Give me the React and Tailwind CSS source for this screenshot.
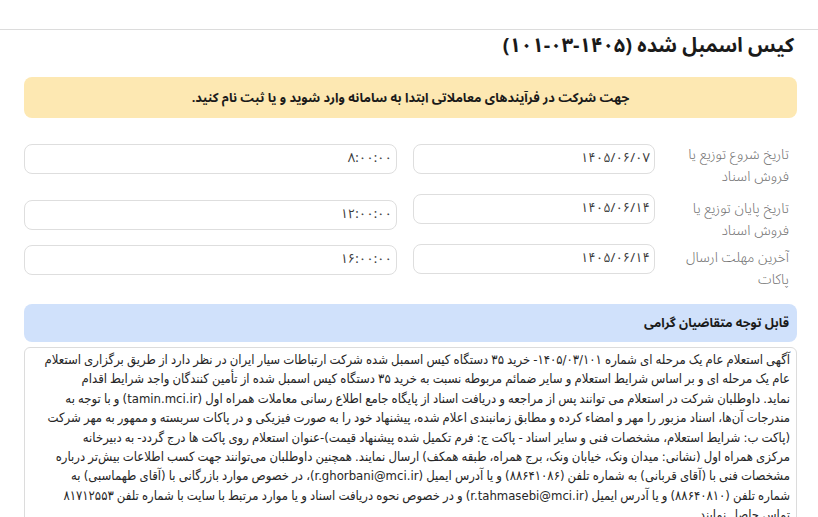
const rows = [
  { label: ["تاریخ شروع توزیع یا", "فروش اسناد"], date: "۱۴۰۵/۰۶/۰۷", time: "۸:۰۰:۰۰", lab: "mt-0", tm: "mt-0" },
  { label: ["تاریخ پایان توزیع یا", "فروش اسناد"], date: "۱۴۰۵/۰۶/۱۴", time: "۱۲:۰۰:۰۰", lab: "mt-[4px]", tm: "mt-[6px]" },
  { label: ["آخرین مهلت ارسال", "پاکات"], date: "۱۴۰۵/۰۶/۱۴", time: "۱۶:۰۰:۰۰", lab: "mt-[3px]", tm: "mt-[1px]" },
];

const notice = [
  "آگهی استعلام عام یک مرحله ای شماره ۱۴۰۵/۰۳/۱۰۱- خرید ۳۵ دستگاه کیس اسمبل شده شرکت ارتباطات سیار ایران در نظر دارد از طریق برگزاری استعلام",
  "عام یک مرحله ای و بر اساس شرایط استعلام و سایر ضمائم مربوطه نسبت به خرید ۳۵ دستگاه کیس اسمبل شده از تأمین کنندگان واجد شرایط اقدام",
  "نماید. داوطلبان شرکت در استعلام می توانند پس از مراجعه و دریافت اسناد از پایگاه جامع اطلاع رسانی معاملات همراه اول (tamin.mci.ir) و با توجه به",
  "مندرجات آن‌ها، اسناد مزبور را مهر و امضاء کرده و مطابق زمانبندی اعلام شده، پیشنهاد خود را به صورت فیزیکی و در پاکات سربسته و ممهور به مهر شرکت",
  "(پاکت ب: شرایط استعلام، مشخصات فنی و سایر اسناد - پاکت ج: فرم تکمیل شده پیشنهاد قیمت)-عنوان استعلام روی پاکت ها درج گردد- به دبیرخانه",
  "مرکزی همراه اول (نشانی: میدان ونک، خیابان ونک، برج همراه، طبقه همکف) ارسال نمایند. همچنین داوطلبان می‌توانند جهت کسب اطلاعات بیش‌تر درباره",
  "مشخصات فنی با (آقای قربانی) به شماره تلفن (۸۸۶۴۱۰۸۶) و یا آدرس ایمیل (r.ghorbani@mci.ir)، در خصوص موارد بازرگانی با (آقای طهماسبی) به",
  "شماره تلفن (۸۸۶۴۰۸۱۰) و یا آدرس ایمیل (r.tahmasebi@mci.ir) و در خصوص نحوه دریافت اسناد و یا موارد مرتبط با سایت با شماره تلفن ۸۱۷۱۲۵۵۳",
  "تماس حاصل نمایند.",
];

function Field({ value, className }) {
  return (
    <div className={`flex h-[30px] items-center rounded-lg border border-[#dedede] pr-[4px] text-[13px] text-[#3a3a3a] ${className}`}>
      {value}
    </div>
  );
}

export default function App() {
  return (
    <div dir="rtl" className="min-h-screen w-full bg-white font-['Noto_Sans_Arabic',sans-serif] text-[#222]">
      <div className="h-[30px] border-b border-[#dcdcdc]"></div>

      <div className="pr-[21px] pl-[24px]">
        <h1 className="h-[33px] pr-[3px] text-[20px] font-bold leading-[33px] text-[#1a1a1a]">
          کیس اسمبل شده (۱۴۰۵-۰۳-۱۰۱)
        </h1>

        <div className="mt-[14px] flex h-[41px] items-center justify-center rounded-lg bg-[#fde8b2] text-[12.8px] font-bold text-[#1a1a1a]">
          جهت شرکت در فرآیندهای معاملاتی ابتدا به سامانه وارد شوید و یا ثبت نام کنید.
        </div>

        <div className="mt-[26px] flex flex-col">
          {rows.map((r, i) => (
            <div key={i} className="flex h-[50px] items-start">
              <p className={`w-[142px] pr-2 text-[14px] font-light leading-[22px] text-[#707070] ${r.lab}`}>
                {r.label[0]}
                <br />
                {r.label[1]}
              </p>
              <Field value={r.date} className="w-[242px]" />
              <Field value={r.time} className={`mr-4 flex-1 ${r.tm}`} />
            </div>
          ))}
        </div>

        <div className="mt-[10px] flex h-[38px] items-center rounded-lg bg-[#d0e1fb] pr-[8px] text-[12.5px] font-bold text-[#1a1a1a]">
          قابل توجه متقاضیان گرامی
        </div>

        <div className="mt-[5px] rounded-md border border-[#dcdcdc] px-[6px] pt-[2px] pb-2 font-['DejaVu_Sans_Condensed',sans-serif] text-[13px] leading-[19.4px] text-[#262626] [word-spacing:-0.6px]">
          {notice.map((line, i) => (
            <span key={i} className="block whitespace-nowrap">
              {line}
            </span>
          ))}
        </div>
      </div>
    </div>
  );
}
